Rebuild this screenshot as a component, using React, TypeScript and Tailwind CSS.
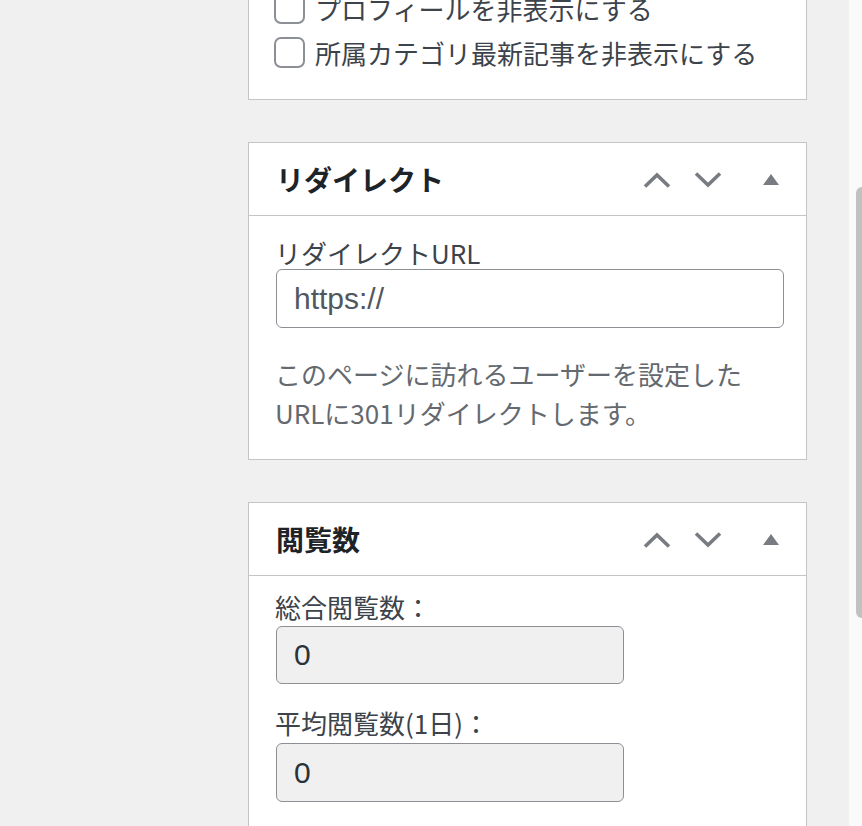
import React from "react";

const jp = { fontFamily: '"Noto Sans CJK JP", "Noto Sans", sans-serif' };
const latin = { fontFamily: '"Liberation Sans", Arial, "Noto Sans CJK JP", sans-serif' };

function UpIcon() {
  return (
    <svg width="28" height="16" viewBox="0 0 28 16" className="block">
      <polyline points="2,14.5 14,3 26,14.5" fill="none" stroke="#787c82" strokeWidth="3.6" />
    </svg>
  );
}
function DownIcon() {
  return (
    <svg width="28" height="16" viewBox="0 0 28 16" className="block">
      <polyline points="2,1.5 14,13 26,1.5" fill="none" stroke="#787c82" strokeWidth="3.6" />
    </svg>
  );
}
function TriIcon() {
  return (
    <svg width="16" height="11" viewBox="0 0 16 11" className="block">
      <polygon points="8,0 16,11 0,11" fill="#787c82" />
    </svg>
  );
}

function Header({ title }: { title: string }) {
  return (
    <div className="flex h-[73px] items-center border-b border-[#c3c4c7] pl-[27px] pr-[27px]">
      <h2 className="flex-1 text-[28px] font-bold leading-none text-[#1d2327]" style={jp}>
        {title}
      </h2>
      <div className="flex items-center">
        <div className="mt-[2px]">
          <UpIcon />
        </div>
        <div className="ml-[23px] mt-[2px]">
          <DownIcon />
        </div>
        <div className="ml-[41px]">
          <TriIcon />
        </div>
      </div>
    </div>
  );
}

function Checkbox({ label, className = "" }: { label: string; className?: string }) {
  return (
    <div className={"flex h-[31px] items-center gap-[10px] " + className}>
      <div className="h-[31px] w-[31px] rounded-[7px] border-2 border-[#8c8f94] bg-white" />
      <span className="text-[26px] leading-none text-[#3c434a]" style={jp}>
        {label}
      </span>
    </div>
  );
}

export default function App() {
  return (
    <div className="flex h-[826px] w-full overflow-hidden bg-[#f0f0f1]">
      <div className="flex-1 pl-[248px]">
        <div className="w-[559px]">
          {/* Panel 1 (cut at top) */}
          <div className="-mt-[20px] border border-[#c3c4c7] bg-white pb-[31px] pl-[25px] pt-[12px]">
            <Checkbox label="プロフィールを非表示にする" />
            <Checkbox label="所属カテゴリ最新記事を非表示にする" className="mt-[13px]" />
          </div>

          {/* Panel 2 */}
          <div className="mt-[42px] border border-[#c3c4c7] bg-white">
            <Header title="リダイレクト" />
            <div className="pb-[27px] pl-[26px] pr-[22px] pt-[21px]">
              <div className="text-[26px] leading-[32px] text-[#3c434a]" style={jp}>
                リダイレクトURL
              </div>
              <div className="ml-[1px] flex h-[59px] items-center rounded-[6px] border border-[#8c8f94] bg-white pl-[17px]">
                <span className="text-[30px] leading-none text-[#50575e]" style={latin}>
                  https://
                </span>
              </div>
              <p className="mt-[26px] text-[26px] leading-[39px] text-[#646970]" style={jp}>
                このページに訪れるユーザーを設定した
                <br />
                URLに301リダイレクトします。
              </p>
            </div>
          </div>

          {/* Panel 3 */}
          <div className="mt-[42px] border border-[#c3c4c7] bg-white pb-[60px]">
            <Header title="閲覧数" />
            <div className="pl-[26px] pt-[15px]">
              <div className="text-[26px] leading-[32px] text-[#3c434a]" style={jp}>
                総合閲覧数：
              </div>
              <div className="ml-[1px] mt-[3px] flex h-[58px] w-[348px] items-center rounded-[6px] border border-[#8c8f94] bg-[#f0f0f1] pl-[17px]">
                <span className="text-[30px] leading-none text-[#2c3338]" style={latin}>
                  0
                </span>
              </div>
              <div className="mt-[23px] text-[26px] leading-[32px] text-[#3c434a]" style={jp}>
                平均閲覧数(1日)：
              </div>
              <div className="ml-[1px] mt-[4px] flex h-[59px] w-[348px] items-center rounded-[6px] border border-[#8c8f94] bg-[#f0f0f1] pl-[17px]">
                <span className="text-[30px] leading-none text-[#2c3338]" style={latin}>
                  0
                </span>
              </div>
            </div>
          </div>
        </div>
      </div>
      {/* scrollbar */}
      <div className="w-[13px] shrink-0 bg-[#fafafa] pl-[7px]">
        <div className="mt-[187px] h-[431px] w-[6px] rounded-l-[6px] bg-[#c1c1c1]" />
      </div>
    </div>
  );
}
